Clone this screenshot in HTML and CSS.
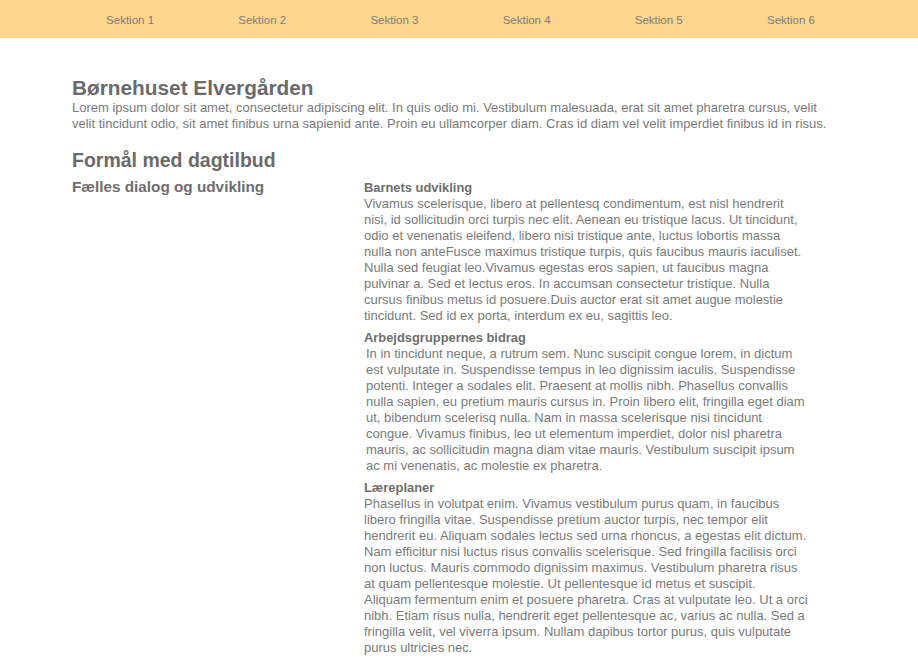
FILE: index.html
```html
<!DOCTYPE html>
<html lang="da">
<head>
<meta charset="utf-8">
<title>Børnehuset Elvergården</title>
<link rel="stylesheet" href="styles.css">
</head>
<body>
<nav class="topnav">
  <a class="nav-item" href="#">Sektion 1</a>
  <a class="nav-item" href="#">Sektion 2</a>
  <a class="nav-item" href="#">Sektion 3</a>
  <a class="nav-item" href="#">Sektion 4</a>
  <a class="nav-item" href="#">Sektion 5</a>
  <a class="nav-item" href="#">Sektion 6</a>
</nav>
<main class="content">
  <h1 class="title">Børnehuset Elvergården</h1>
  <p class="intro">Lorem ipsum dolor sit amet, consectetur adipiscing elit. In quis odio mi. Vestibulum malesuada, erat sit amet pharetra cursus, velit velit tincidunt odio, sit amet finibus urna sapienid ante. Proin eu ullamcorper diam. Cras id diam vel velit imperdiet finibus id in risus.</p>
  <h2 class="section-title">Formål med dagtilbud</h2>
  <div class="row">
    <h3 class="side-title">Fælles dialog og udvikling</h3>
    <div class="articles">
      <section class="article">
        <h4 class="article-title">Barnets udvikling</h4>
        <p class="article-body">Vivamus scelerisque, libero at pellentesq condimentum, est nisl hendrerit nisi, id sollicitudin orci turpis nec elit. Aenean eu tristique lacus. Ut tincidunt, odio et venenatis eleifend, libero nisi tristique ante, luctus lobortis massa nulla non anteFusce maximus tristique turpis, quis faucibus mauris iaculiset. Nulla sed feugiat leo.Vivamus egestas eros sapien, ut faucibus magna pulvinar a. Sed et lectus eros. In accumsan consectetur tristique. Nulla cursus finibus metus id posuere.Duis auctor erat sit amet augue molestie tincidunt. Sed id ex porta, interdum ex eu, sagittis leo.</p>
      </section>
      <section class="article">
        <h4 class="article-title">Arbejdsgruppernes bidrag</h4>
        <p class="article-body indented">In in tincidunt neque, a rutrum sem. Nunc suscipit congue lorem, in dictum est vulputate in. Suspendisse tempus in leo dignissim iaculis. Suspendisse potenti. Integer a sodales elit. Praesent at mollis nibh. Phasellus convallis nulla sapien, eu pretium mauris cursus in. Proin libero elit, fringilla eget diam ut, bibendum scelerisq nulla. Nam in massa scelerisque nisi tincidunt congue. Vivamus finibus, leo ut elementum imperdiet, dolor nisl pharetra mauris, ac sollicitudin magna diam vitae mauris. Vestibulum suscipit ipsum ac mi venenatis, ac molestie ex pharetra.</p>
      </section>
      <section class="article">
        <h4 class="article-title">Læreplaner</h4>
        <p class="article-body">Phasellus in volutpat enim. Vivamus vestibulum purus quam, in faucibus libero fringilla vitae. Suspendisse pretium auctor turpis, nec tempor elit hendrerit eu. Aliquam sodales lectus sed urna rhoncus, a egestas elit dictum. Nam efficitur nisi luctus risus convallis scelerisque. Sed fringilla facilisis orci non luctus. Mauris commodo dignissim maximus. Vestibulum pharetra risus at quam pellentesque molestie. Ut pellentesque id metus et suscipit.<br>Aliquam fermentum enim et posuere pharetra. Cras at vulputate leo. Ut a orci nibh. Etiam risus nulla, hendrerit eget pellentesque ac, varius ac nulla. Sed a fringilla velit, vel viverra ipsum. Nullam dapibus tortor purus, quis vulputate purus ultricies nec.</p>
      </section>
    </div>
  </div>
</main>
</body>
</html>
```

FILE: styles.css
```css
html, body {
  margin: 0;
  padding: 0;
  background: #ffffff;
}

body {
  font-family: "Liberation Sans", Arial, Helvetica, sans-serif;
  color: #7a7a7a;
}

.topnav {
  display: flex;
  height: 38px;
  background: #fdd58f;
  padding: 0 61px 0 64px;
}

.nav-item {
  flex: 1;
  text-align: center;
  font-size: 11.5px;
  line-height: 40px;
  color: #7b7b7b;
  text-decoration: none;
}

.content {
  padding: 38px 80px 0 72px;
}

.title {
  margin: 0;
  font-size: 20.8px;
  line-height: 24px;
  font-weight: bold;
  color: #6a6a6a;
}

.intro {
  margin: 0;
  font-size: 13px;
  line-height: 16px;
}

.section-title {
  margin: 16px 0 0 0;
  font-size: 19.5px;
  line-height: 24px;
  font-weight: bold;
  color: #6a6a6a;
}

.row {
  display: grid;
  grid-template-columns: 292px 444px;
  margin-top: 6px;
}

.side-title {
  margin: 0;
  font-size: 15.3px;
  line-height: 18px;
  font-weight: bold;
  color: #6e6e6e;
}

.articles {
  display: flex;
  flex-direction: column;
  gap: 6px;
  padding-top: 2px;
}

.article-title {
  margin: 0;
  font-size: 12.9px;
  line-height: 16px;
  font-weight: bold;
  color: #6e6e6e;
}

.article-body {
  margin: 0;
  font-size: 13px;
  line-height: 16px;
}

.article-body.indented {
  padding-left: 2px;
}
```
